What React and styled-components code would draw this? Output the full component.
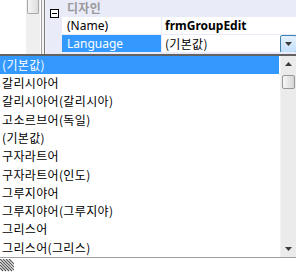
import React from "react";
import styled, { createGlobalStyle } from "styled-components";

const GlobalStyle = createGlobalStyle`
  html, body {
    margin: 0;
    padding: 0;
    background: #ffffff;
  }
`;

const Page = styled.div`
  width: 296px;
  height: 273px;
  overflow: hidden;
  display: flex;
  flex-direction: column;
  background: #ffffff;
  font-family: "Noto Sans", "Liberation Sans", "Noto Sans CJK KR", sans-serif;
  font-size: 12px;
  color: #000;
`;

const Top = styled.div`
  height: 54px;
  display: flex;
`;

const Blank = styled.div`
  width: 26px;
  background: #ffffff;
`;

const Track = styled.div`
  width: 14px;
  background: #efefef;
  display: flex;
  flex-direction: column;
`;

const Thumb = styled.div`
  height: 13px;
  margin: 0 1px;
  border: 1px solid #a8a8a8;
  border-top: none;
  border-radius: 0 0 2px 2px;
  background: linear-gradient(to right, #f6f6f6, #dcdcdc);
`;

const Splitter = styled.div`
  width: 5px;
  display: flex;
  background: #f4f4f4;
  border-left: 1px solid #ffffff;
`;

const SplitLine = styled.span`
  width: ${(p) => p.$w || 1}px;
  background: ${(p) => p.$c};
`;

const Grid = styled.div`
  flex: 1;
  display: grid;
  grid-template-columns: 16px 99px 1fr;
  grid-template-rows: 17px 18px 18px;
  background: #e9ecf8;
  align-content: start;
`;

const Margin = styled.div`
  grid-column: 1;
  grid-row: 1 / 4;
  background: #e9ecf8;
  padding: 5px 0 0 4px;
`;

const Category = styled.div`
  grid-column: 2 / 4;
  grid-row: 1;
  font-family: "Noto Sans CJK KR", sans-serif;
  font-weight: bold;
  color: #9a9a9a;
  font-size: 12px;
  line-height: 16px;
  padding-left: 5px;
  letter-spacing: 0.3px;
`;

const Cell = styled.div`
  display: flex;
  align-items: center;
  height: 17px;
  border-bottom: 1px solid #e9ecf8;
  padding-left: ${(p) => (p.$value ? "3px" : "5px")};
  background: ${(p) => (p.$selected ? "#3399ff" : "#ffffff")};
  color: ${(p) => (p.$selected ? "#ffffff" : "#000000")};
  font-weight: ${(p) => (p.$bold ? "bold" : "normal")};
  border-left: ${(p) => (p.$value ? "1px solid #e9ecf8" : "none")};
  white-space: nowrap;
  overflow: hidden;
  position: relative;
`;

const KoText = styled.span`
  font-family: "Noto Sans CJK KR", sans-serif;
  letter-spacing: 0.3px;
`;

const DropButton = styled.div`
  position: absolute;
  right: -1px;
  top: 0;
  width: 15px;
  height: 16px;
  border: 1px solid #3c7fb1;
  border-radius: 2px;
  background: linear-gradient(#e5f1fb, #c4e0fa);
  display: flex;
  align-items: center;
  justify-content: center;
`;

const Popup = styled.div`
  border-top: 2px solid #626262;
  border-bottom: 1px solid #a0a0a0;
  display: flex;
  height: 202px;
`;

const List = styled.div`
  flex: 1;
  padding-right: 1px;
`;

const Item = styled.div`
  height: 18.3px;
  line-height: 18px;
  padding-left: 2px;
  font-family: "Noto Sans CJK KR", sans-serif;
  font-size: 12px;
  letter-spacing: 0.35px;
  background: ${(p) => (p.$active ? "#3399ff" : "transparent")};
  color: ${(p) => (p.$active ? "#ffffff" : "#000000")};
  white-space: nowrap;
`;

const ScrollBar = styled.div`
  width: 15px;
  background: #ebebeb;
  border-left: 1px solid #f2f2f2;
  display: flex;
  flex-direction: column;
  align-items: center;
`;

const Arrow = styled.div`
  height: 17px;
  width: 15px;
  display: flex;
  align-items: center;
  justify-content: center;
`;

const ListThumb = styled.div`
  width: 13px;
  height: 14px;
  border: 1px solid #979797;
  border-radius: 2px;
  background: linear-gradient(to right, #f7f7f7, #d6d6d6);
  box-sizing: border-box;
  margin-top: 2px;
`;

const Spacer = styled.div`
  flex: 1;
`;

const Footer = styled.div`
  height: 14px;
  display: flex;
  align-items: flex-start;
  padding-top: 1px;
`;

const Tri = ({ up }) => (
  <svg width="7" height="4" viewBox="0 0 7 4">
    {up ? (
      <path d="M3.5 0 L7 4 L0 4 Z" fill="#3a3a3a" />
    ) : (
      <path d="M0 0 L7 0 L3.5 4 Z" fill="#3a3a3a" />
    )}
  </svg>
);

const items = [
  "(기본값)",
  "갈리시아어",
  "갈리시아어(갈리시아)",
  "고소르브어(독일)",
  "(기본값)",
  "구자라트어",
  "구자라트어(인도)",
  "그루지야어",
  "그루지야어(그루지야)",
  "그리스어",
  "그리스어(그리스)",
];

export default function App() {
  return (
    <>
      <GlobalStyle />
      <Page>
        <Top>
          <Blank />
          <Track>
            <Thumb />
          </Track>
          <Splitter>
            <SplitLine $c="#a0a0a0" />
            <SplitLine $c="#f4f4f4" $w={2} />
            <SplitLine $c="#7a7a7a" />
          </Splitter>
          <Grid>
            <Margin>
              <svg width="9" height="9" viewBox="0 0 9 9">
                <rect x="0.5" y="0.5" width="8" height="8" fill="#fff" stroke="#000" />
                <path d="M2 4.5 H7" stroke="#000" />
              </svg>
            </Margin>
            <Category>디자인</Category>
            <Cell>(Name)</Cell>
            <Cell $value $bold>frmGroupEdit</Cell>
            <Cell $selected>Language</Cell>
            <Cell $value>
              <KoText>(기본값)</KoText>
              <DropButton>
                <Tri />
              </DropButton>
            </Cell>
          </Grid>
        </Top>
        <Popup>
          <List>
            {items.map((t, i) => (
              <Item key={i} $active={i === 0}>
                {t}
              </Item>
            ))}
          </List>
          <ScrollBar>
            <Arrow>
              <Tri up />
            </Arrow>
            <ListThumb />
            <Spacer />
            <Arrow>
              <Tri />
            </Arrow>
          </ScrollBar>
        </Popup>
        <Footer>
          <svg width="14" height="13" viewBox="0 0 14 13">
            {[0, 3, 6, 9].map((o) => (
              <path key={o} d={`M${o} 0 L${o + 12} 12`} stroke="#555" strokeWidth="1.2" />
            ))}
            {[3, 6, 9].map((o) => (
              <path key={"b" + o} d={`M0 ${o} L${12 - o} 12`} stroke="#555" strokeWidth="1.2" />
            ))}
          </svg>
        </Footer>
      </Page>
    </>
  );
}
